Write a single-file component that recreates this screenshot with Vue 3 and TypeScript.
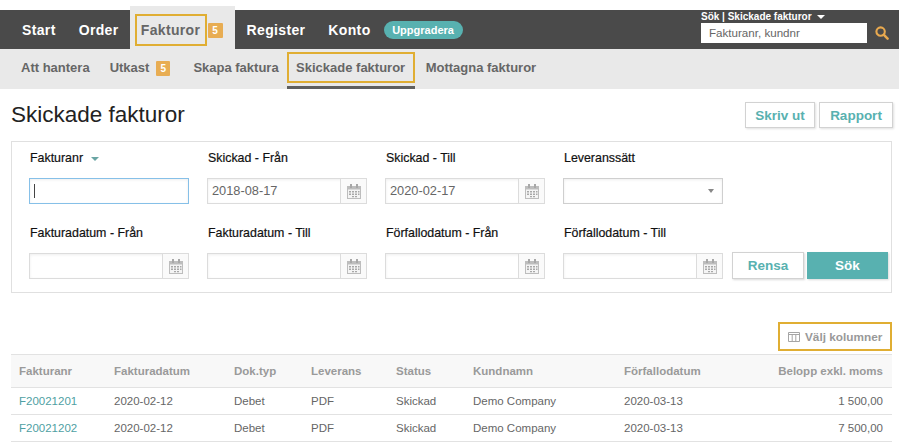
<script setup lang="ts">
interface Row { nr: string; date: string; typ: string; lev: string; status: string; kund: string; due: string; sum: string }
const rows: Row[] = [
  { nr: 'F20021201', date: '2020-02-12', typ: 'Debet', lev: 'PDF', status: 'Skickad', kund: 'Demo Company', due: '2020-03-13', sum: '1 500,00' },
  { nr: 'F20021202', date: '2020-02-12', typ: 'Debet', lev: 'PDF', status: 'Skickad', kund: 'Demo Company', due: '2020-03-13', sum: '7 500,00' },
]
const heads = ['Fakturanr', 'Fakturadatum', 'Dok.typ', 'Leverans', 'Status', 'Kundnamn', 'Förfallodatum', 'Belopp exkl. moms']
</script>

<template>
  <div class="page">
    <header class="top">
      <nav class="main">
        <a class="m start">Start</a>
        <a class="m order">Order</a>
        <div class="tab"><span class="hl">Fakturor</span><span class="badge">5</span></div>
        <a class="m reg">Register</a>
        <a class="m konto">Konto</a>
        <span class="pill">Uppgradera</span>
      </nav>
      <div class="search">
        <div class="s-label">Sök | Skickade fakturor <i class="tri white"></i></div>
        <div class="s-row">
          <div class="s-input">Fakturanr, kundnr</div>
          <svg class="mag" width="14" height="14" viewBox="0 0 14 14"><circle cx="5.6" cy="5.6" r="4.2" fill="none" stroke="#e8a94f" stroke-width="2.1"/><path d="M8.9 8.9 12.6 12.6" stroke="#e8a94f" stroke-width="2.5" stroke-linecap="round"/></svg>
        </div>
      </div>
    </header>

    <nav class="sub">
      <a class="s">Att hantera</a>
      <a class="s ut">Utkast<span class="badge small">5</span></a>
      <a class="s sk">Skapa faktura</a>
      <a class="s active"><span>Skickade fakturor</span></a>
      <a class="s mo">Mottagna fakturor</a>
    </nav>

    <div class="head">
      <h1>Skickade fakturor</h1>
      <div class="head-btns">
        <button class="b-out w1">Skriv ut</button>
        <button class="b-out w2">Rapport</button>
      </div>
    </div>

    <section class="filter">
      <div class="field">
        <label>Fakturanr <i class="tri teal"></i></label>
        <div class="inp focus"><span class="caret"></span></div>
      </div>
      <div class="field">
        <label>Skickad - Från</label>
        <div class="inp"><span class="val">2018-08-17</span><span class="cal"><svg width="14" height="15" viewBox="0 0 14 15"><use href="#cal"/></svg></span></div>
      </div>
      <div class="field">
        <label>Skickad - Till</label>
        <div class="inp"><span class="val">2020-02-17</span><span class="cal"><svg width="14" height="15" viewBox="0 0 14 15"><use href="#cal"/></svg></span></div>
      </div>
      <div class="field">
        <label>Leveranssätt</label>
        <div class="inp sel"><i class="tri gray"></i></div>
      </div>
      <div class="empty"></div>

      <div class="field">
        <label>Fakturadatum - Från</label>
        <div class="inp"><span class="val"></span><span class="cal"><svg width="14" height="15" viewBox="0 0 14 15"><use href="#cal"/></svg></span></div>
      </div>
      <div class="field">
        <label>Fakturadatum - Till</label>
        <div class="inp"><span class="val"></span><span class="cal"><svg width="14" height="15" viewBox="0 0 14 15"><use href="#cal"/></svg></span></div>
      </div>
      <div class="field">
        <label>Förfallodatum - Från</label>
        <div class="inp"><span class="val"></span><span class="cal"><svg width="14" height="15" viewBox="0 0 14 15"><use href="#cal"/></svg></span></div>
      </div>
      <div class="field">
        <label>Förfallodatum - Till</label>
        <div class="inp"><span class="val"></span><span class="cal"><svg width="14" height="15" viewBox="0 0 14 15"><use href="#cal"/></svg></span></div>
      </div>
      <div class="actions">
        <button class="rensa">Rensa</button>
        <button class="sok">Sök</button>
      </div>
    </section>

    <div class="cols-bar">
      <div class="cols">
        <svg width="12" height="10" viewBox="0 0 12 10"><path d="M.5.5h11v9H.5zM.5 2.5h11M4.2 2.5v7M7.8 2.5v7" fill="none" stroke="#a5a5a5"/></svg>
        Välj kolumner
      </div>
    </div>

    <div class="table">
      <div class="tr th">
        <span v-for="h in heads" :key="h">{{ h }}</span>
      </div>
      <div v-for="r in rows" :key="r.nr" class="tr td">
        <span class="link">{{ r.nr }}</span>
        <span>{{ r.date }}</span>
        <span>{{ r.typ }}</span>
        <span>{{ r.lev }}</span>
        <span>{{ r.status }}</span>
        <span>{{ r.kund }}</span>
        <span>{{ r.due }}</span>
        <span>{{ r.sum }}</span>
      </div>
    </div>

    <svg class="defs" width="0" height="0">
      <symbol id="cal" viewBox="0 0 14 15">
        <rect x="0.5" y="2.5" width="13" height="12" fill="#f4f4f4" stroke="#bdbdbd"/>
        <rect x="0" y="2" width="14" height="3.5" fill="#bdbdbd"/>
        <rect x="3" y="0" width="2" height="4" fill="#a8a8a8"/>
        <rect x="9" y="0" width="2" height="4" fill="#a8a8a8"/>
        <path d="M2 7h2v1.5H2zM5 7h2v1.5H5zM8 7h2v1.5H8zM11 7h1.5v1.5H11zM2 9.5h2V11H2zM5 9.5h2V11H5zM8 9.5h2V11H8zM11 9.5h1.5V11H11zM5 12h2v1.3H5zM8 12h2v1.3H8z" fill="#a8a8a8"/>
      </symbol>
    </svg>
  </div>
</template>

<style>
body { background: #fff; }
</style>

<style scoped>
.page { width: 899px; height: 448px; overflow: hidden; font-family: "Liberation Sans", Arial, sans-serif; background: #fff; padding-top: 10px; box-sizing: border-box; position: relative; }
.top { height: 39px; background: #4a4a4a; display: flex; justify-content: space-between; }
.main { display: flex; align-items: flex-start; }
.m { color: #fff; font-weight: 700; font-size: 14px; line-height: 40px; letter-spacing: .35px; white-space: nowrap; }
.start { margin-left: 22px; }
.order { margin-left: 23px; }
.tab { margin-left: 11px; width: 105px; height: 43px; margin-top: -4px; background: #e9e9e9; display: flex; align-items: flex-start; box-sizing: border-box; padding: 8px 0 0 5px; flex: none; }
.hl { width: 72px; height: 32px; border: 2px solid #e0ae33; box-sizing: border-box; color: #666; font-weight: 700; font-size: 14px; line-height: 28px; text-align: center; letter-spacing: .35px; }
.badge { display: inline-block; width: 15px; height: 15px; margin: 9px 0 0 1px; background: #e8ad53; color: #fff; font-size: 10px; font-weight: 700; line-height: 16px; text-align: center; border-radius: 1px; }
.reg { margin-left: 12px; }
.konto { margin-left: 23px; }
.pill { margin: 11px 0 0 13px; width: 79px; height: 18px; border-radius: 9px; background: #58b1b0; color: #fff; font-size: 11px; font-weight: 700; line-height: 18px; text-align: center; }
.search { width: 198px; }
.s-label { color: #fff; font-size: 10px; font-weight: 700; line-height: 13px; white-space: nowrap; }
.s-row { display: flex; align-items: center; gap: 8px; }
.s-input { width: 166px; height: 20px; background: #fff; box-sizing: border-box; color: #666; font-size: 11.6px; line-height: 20px; padding-left: 8px; }
.mag { flex: none; }
.tri { display: inline-block; width: 0; height: 0; border-left: 4px solid transparent; border-right: 4px solid transparent; border-top: 4px solid #fff; }
.tri.white { margin-left: 3px; vertical-align: 1px; }
.tri.teal { border-top-color: #6aa5a4; margin-left: 5px; vertical-align: 1px; }
.tri.gray { border-top-color: #888; border-left-width: 3.5px; border-right-width: 3.5px; }

.sub { height: 40px; background: #e9e9e9; display: flex; align-items: flex-start; }
.s { color: #666; font-size: 13px; font-weight: 700; line-height: 38px; white-space: nowrap; margin-left: 21px; }
.badge.small { margin: 0 0 0 7px; width: 14px; height: 15px; line-height: 16px; }
.s.ut { display: flex; align-items: center; height: 38px; margin-left: 20px; }
.s.sk { margin-left: 23px; }
.s.active { margin-left: 8px; width: 128px; height: 34px; margin-top: 3px; border-bottom: 3px solid #5f5f5f; flex: none; }
.s.active span { display: block; height: 31px; border: 2px solid #e0ae33; box-sizing: border-box; line-height: 27px; text-align: center; }
.s.mo { margin-left: 11px; }

.head { display: flex; justify-content: space-between; padding: 13px 6px 0 11px; height: 39px; }
h1 { margin: 0; font-size: 22.5px; font-weight: 400; color: #222; line-height: 26px; }
.head-btns { display: flex; gap: 4px; }
button { font-family: inherit; cursor: pointer; padding: 0; }
.b-out { height: 26px; background: #fff; border: 1px solid #d2d2d2; color: #58b1b0; font-weight: 700; font-size: 13.5px; box-shadow: 1px 1px 2px rgba(0,0,0,.12); }
.w1 { width: 70px; }
.w2 { width: 74px; }

.filter { margin: 0 7px 0 11px; height: 152px; border: 1px solid #e0e0e0; box-sizing: border-box; display: grid; grid-template-columns: 160px 160px 160px 160px 1fr; column-gap: 18px; grid-template-rows: 75px 75px; padding: 6px 0 0 17px; }
.field { display: flex; flex-direction: column; }
label { color: #111; font-size: 12.4px; -webkit-text-stroke: .2px #111; line-height: 20px; height: 30px; padding-left: 1px; white-space: nowrap; }
.inp { height: 26px; border: 1px solid #dcdcdc; box-sizing: border-box; display: flex; background: #fff; box-shadow: inset 0 1px 3px rgba(0,0,0,.07); }
.focus { border-color: #86c0e8; align-items: center; padding-left: 4px; }
.caret { width: 1px; height: 14px; background: #444; }
.val { flex: 1; color: #666; font-size: 12.8px; line-height: 24px; padding-left: 4px; }
.cal { width: 25px; border-left: 1px solid #dcdcdc; display: flex; align-items: center; justify-content: center; background: #fafafa; }
.cal svg { display: block; }
.sel { border-color: #cfcfcf; justify-content: flex-end; align-items: center; padding-right: 8px; }
.actions { display: flex; gap: 3px; margin: 29px 0 0 -9px; align-self: start; }
.rensa { width: 72px; height: 27px; background: #fff; border: 1px solid #d2d2d2; color: #58b1b0; font-weight: 700; font-size: 13.5px; box-shadow: 1px 1px 2px rgba(0,0,0,.15); }
.sok { width: 81px; height: 27px; background: #58b1b0; border: 0; color: #fff; font-weight: 700; font-size: 13.5px; box-shadow: 1px 1px 2px rgba(0,0,0,.15); }

.cols-bar { display: flex; justify-content: flex-end; padding: 29px 7px 0 0; height: 32px; }
.cols { width: 114px; height: 29px; border: 2px solid #e0ae33; box-sizing: border-box; color: #999; font-size: 11.8px; font-weight: 700; display: flex; align-items: center; gap: 5px; padding-left: 8px; white-space: nowrap; }

.table { margin: 0 7px 0 11px; font-size: 11.5px; color: #666; }
.tr { display: grid; grid-template-columns: 95px 120px 77px 85px 77px 151px 1fr 140px; padding: 0 9px 0 8px; align-items: center; border-bottom: 1px solid #e2e2e2; }
.tr span:last-child { text-align: right; }
.th { height: 34px; box-sizing: border-box; background: #f8f8f8; border-top: 1px solid #e2e2e2; color: #9a9a9a; font-weight: 700; }
.td { height: 27px; box-sizing: border-box; }
.link { color: #4f9fa3; }
.defs { position: absolute; }
</style>
